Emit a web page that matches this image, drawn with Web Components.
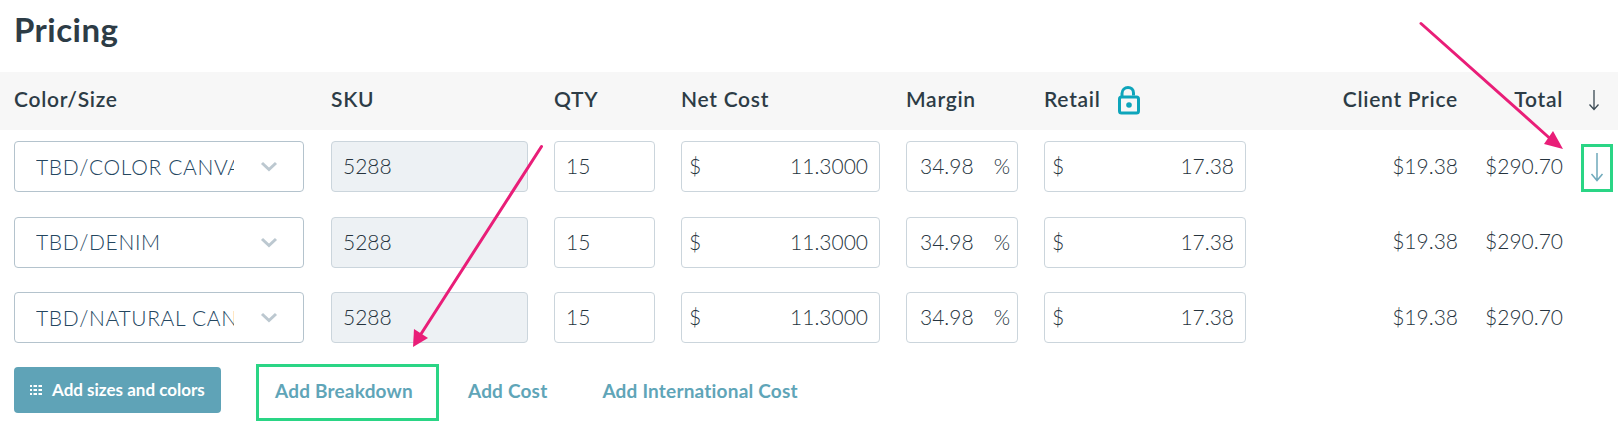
<!DOCTYPE html>
<html><head><meta charset="utf-8"><style>
html,body{margin:0;padding:0;background:#fff}
body{font-family:Lato,"Open Sans",sans-serif;color:#2d3c46;width:1623px;height:428px;overflow:hidden}
</style></head><body>
<pricing-panel>
  <h-row slot="head">
    <h-cell>Color/Size</h-cell><h-cell>SKU</h-cell><h-cell>QTY</h-cell><h-cell>Net Cost</h-cell><h-cell>Margin</h-cell>
    <h-cell>Retail <lock-icon></lock-icon></h-cell>
    <h-cell end>Client Price</h-cell><h-cell end>Total</h-cell><down-arrow></down-arrow>
  </h-row>
  <price-row name="TBD/COLOR CANVAS" arrow></price-row>
  <price-row name="TBD/DENIM"></price-row>
  <price-row name="TBD/NATURAL CANVAS"></price-row>
  <action-bar slot="foot"></action-bar>
</pricing-panel>
<note-overlay></note-overlay>
<script>
const COLS='291px 197px 101px 199px 112px 202px 186px 79px 29px';
function def(name,html,extra){
  customElements.define(name,class extends HTMLElement{
    constructor(){super();this.attachShadow({mode:'open'}).innerHTML=html;}
    connectedCallback(){if(extra)extra(this);}
  });
}
def('pricing-panel',`<style>
:host{display:block;position:relative}
h1{margin:0;padding:10px 0 0 14px;height:61px;box-sizing:border-box;font:700 33px/38px Lato,sans-serif;letter-spacing:.45px;color:#2d3c46}
.rows{display:flex;flex-direction:column;gap:24.5px;padding-top:11px}
.foot{padding-top:24px}
</style><h1>Pricing</h1><slot name="head"></slot><div class="rows"><slot></slot></div><div class="foot"><slot name="foot"></slot></div>`);
def('h-row',`<style>
:host{display:grid;grid-template-columns:${COLS};column-gap:26px;align-items:center;box-sizing:border-box;width:1618px;height:58px;margin-top:11px;padding:0 0 4px 14px;background:#f7f7f7}
</style><slot></slot>`);
def('h-cell',`<style>
:host{display:flex;align-items:center;gap:0;font:600 21px/24px Lato,sans-serif;letter-spacing:.72px;color:#2d3c46;white-space:nowrap}
:host([end]){justify-content:flex-end}
</style><slot></slot>`);
def('lock-icon',`<style>:host{display:inline-flex;width:24px;height:30px;margin-left:16px;margin-top:4px}</style>
<svg width="24" height="30" viewBox="0 0 24 30" fill="none" stroke="#0ea5bb" stroke-width="3"><rect x="2.500" y="11" width="19" height="16" rx="2"/><path d="M5 11V7.500C5 3.500 8 1.500 11 1.500S16.500 3.500 16.500 7V9.500"/><circle cx="12" cy="19" r="2.800" fill="#0ea5bb" stroke="none"/></svg>`);
def('down-arrow',`<style>:host{display:flex;width:24px;height:30px;margin-left:-7px;justify-content:center}</style>
<svg width="24" height="30" viewBox="0 0 24 30" fill="none" stroke="#3b4a54" stroke-width="1.300"><path d="M12 6V25M7.500 20.500L12 25.500L16.500 20.500"/></svg>`);
def('select-box',`<style>
:host{display:flex;align-items:center;box-sizing:border-box;height:51px;margin-right:1px;border:1px solid #b4c3cd;border-radius:4px;background:#fff;padding-left:21px}
.t{width:198px;overflow:hidden;white-space:nowrap;font:300 21px/50px Lato,sans-serif;color:#24465f;letter-spacing:.65px}
svg{margin-left:26px}
</style><div class="t"><slot></slot></div><svg width="18" height="11" viewBox="0 0 18 11" fill="none" stroke="#bcc8d0" stroke-width="3"><path d="M2 2L9 8.500L16 2"/></svg>`);
def('text-field',`<style>
:host{display:flex;align-items:center;justify-content:space-between;box-sizing:border-box;height:51px;border:1px solid #cbd5dc;border-radius:4px;background:#fff;padding:0 11px 2px 7px;font:300 21px/47px Lato,sans-serif;color:#26343e;white-space:nowrap}
:host([ro]){background:#edf1f4;padding-left:11px;justify-content:flex-start}
:host([plain]){padding-left:11px;justify-content:flex-start}
:host([pct]){padding:0 7px 2px 13px}
</style><slot></slot>`);
def('price-row',`<style>
:host{display:grid;grid-template-columns:${COLS};column-gap:26px;align-items:center;padding-left:14px;height:51px;width:1618px;box-sizing:border-box}
.v{text-align:right;font:300 21px/24px Lato,sans-serif;color:#26343e;padding-bottom:2px}
.up{display:flex;justify-content:center;margin-left:-13px}
</style>
<select-box><span id="n"></span></select-box>
<text-field ro>5288</text-field>
<text-field plain>15</text-field>
<text-field><span>$</span><span>11.3000</span></text-field>
<text-field pct><span>34.98</span><span>%</span></text-field>
<text-field><span>$</span><span>17.38</span></text-field>
<div class="v">$19.38</div><div class="v">$290.70</div>
<div class="up" id="a"></div>`,el=>{
  el.shadowRoot.getElementById('n').textContent=el.getAttribute('name');
  if(el.hasAttribute('arrow'))el.shadowRoot.getElementById('a').innerHTML='<svg width="24" height="36" viewBox="0 0 24 36" fill="none" stroke="#6fa9bb" stroke-width="1.500"><path d="M12 4V31M6.500 25L12 31.500L17.500 25"/></svg>';
});
def('action-bar',`<style>
:host{display:flex;align-items:center;padding-left:14px;height:46px;font:700 19px/24px Lato,sans-serif;letter-spacing:.2px;color:#5fa5b8;white-space:nowrap}
button{display:flex;align-items:center;gap:10px;box-sizing:border-box;width:207px;height:46px;border:0;border-radius:4px;background:#5fa3b7;color:#fff;font:700 17px/20px Lato,sans-serif;padding:0 0 0 16px;margin-right:54px}
span{display:block;padding-top:1px}
.b{margin-right:55px}.c{margin-right:55px}
</style><button><svg width="12" height="10" viewBox="0 0 12 10" fill="#fff"><path d="M0 0h2v2H0zM3.500 0h3.500v2H3.500zM8.500 0h3.500v2H8.500zM0 4h2v2H0zM3.500 4h3.500v2H3.500zM8.500 4h3.500v2H8.500zM0 8h2v2H0zM3.500 8h3.500v2H3.500zM8.500 8h3.500v2H8.500z"/></svg>Add sizes and colors</button>
<span class="b">Add Breakdown</span><span class="c">Add Cost</span><span>Add International Cost</span>`);
def('note-overlay',`<style>:host{position:absolute;left:0;top:0;width:1623px;height:428px;pointer-events:none}</style>
<svg width="1623" height="428" viewBox="0 0 1623 428" fill="none">
<rect x="257.500" y="365.500" width="180" height="54" stroke="#2ad585" stroke-width="3"/>
<rect x="1582.500" y="145.500" width="29" height="45" stroke="#2ad585" stroke-width="3"/>
<path d="M1421 23.500L1550 138.500" stroke="#e91e78" stroke-width="3" stroke-linecap="round"/>
<path d="M1563 149L1544 144L1553 131Z" fill="#e91e78"/>
<path d="M541.500 146.500L421 334" stroke="#e91e78" stroke-width="3" stroke-linecap="round"/>
<path d="M413 347L414 329L428 338Z" fill="#e91e78"/>
</svg>`);
</script>
</body></html>
